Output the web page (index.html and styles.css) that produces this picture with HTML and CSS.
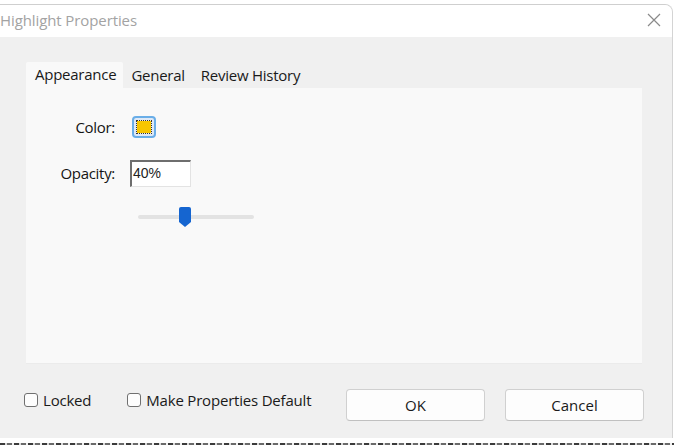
FILE: index.html
```html
<!DOCTYPE html>
<html>
<head>
<meta charset="utf-8">
<link rel="stylesheet" href="styles.css">
</head>
<body>
<div class="window">
  <div class="titlebar">
    <span class="title">Highlight Properties</span>
    <svg class="close" width="14" height="14" viewBox="0 0 14 14"><path d="M1 1L13 13M13 1L1 13" stroke="#8a8a8a" stroke-width="1.2" fill="none"/></svg>
  </div>
  <div class="body">
    <div class="tabs">
      <div class="tab active">Appearance</div>
      <div class="tab">General</div>
      <div class="tab">Review History</div>
    </div>
    <div class="panel">
      <div class="form">
        <div class="label">Color:</div>
        <div class="swatch"><div class="swatch-inner"></div></div>
        <div class="label">Opacity:</div>
        <div class="input">40%</div>
        <div></div>
        <div class="slider"><div class="track"></div><div class="thumb"></div></div>
      </div>
    </div>
    <div class="footer">
      <label class="check"><span class="box"></span>Locked</label>
      <label class="check second"><span class="box"></span>Make Properties Default</label>
      <div class="buttons">
        <button class="btn">OK</button>
        <button class="btn">Cancel</button>
      </div>
    </div>
  </div>
</div>
<div class="desktop"><div class="dash"></div></div>
</body>
</html>
```
FILE: styles.css
```css
html, body {
  margin: 0;
  padding: 0;
  background: #ffffff;
  width: 674px;
  height: 445px;
  overflow: hidden;
  font-family: "Open Sans", "Noto Sans", sans-serif;
  font-size: 15px;
  color: #141414;
}
.window {
  margin-top: 4px;
  width: 672px;
  height: 433px;
  border-top: 1px solid #cfcfcf;
  border-right: 1px solid #d4d4d4;
  border-top-right-radius: 8px;
  background: #f0f0f0;
  display: flex;
  flex-direction: column;
  overflow: hidden;
}
.titlebar {
  height: 32px;
  background: #ffffff;
  display: flex;
  align-items: center;
  justify-content: space-between;
  padding: 0 11px 0 0;
  flex: none;
}
.title {
  color: #a3a3a3;
  font-size: 15px;
  letter-spacing: -0.1px;
  margin-top: -2px;
}
.close {
  margin-top: -2px;
}
.body {
  flex: 1;
  padding: 25px 30px 0 26px;
  display: flex;
  flex-direction: column;
}
.tabs {
  display: flex;
  height: 26px;
  align-items: stretch;
}
.tab {
  padding: 2px 8px 0 8px;
  line-height: 22px;
  font-size: 15px;
  letter-spacing: -0.25px;
  color: #1a1a1a;
}
.tab.active {
  background: #f9f9f9;
  padding: 1px 7px 0 9px;
  border-top-left-radius: 2px;
  border-top-right-radius: 2px;
}
.panel {
  width: 616px;
  height: 276px;
  background: #f9f9f9;
  border-bottom: 1px solid #ebebeb;
  box-sizing: border-box;
}
.form {
  display: grid;
  grid-template-columns: 89px 150px;
  column-gap: 16px;
  grid-template-rows: 26px 28px 22px;
  row-gap: 19px;
  padding-top: 26px;
  align-items: center;
}
.label {
  text-align: right;
  font-size: 15px;
  letter-spacing: -0.3px;
}
.swatch {
  width: 20px;
  height: 18px;
  border: 2px solid #6aaee8;
  border-radius: 4px;
  background: #dfe9f6;
  display: flex;
  align-items: center;
  justify-content: center;
  margin-left: 1px;
}
.swatch-inner {
  width: 14px;
  height: 12px;
  background: #f7c600;
  outline: 1px dotted #333;
  outline-offset: 0px;
}
.input {
  width: 57px;
  height: 24px;
  background: #ffffff;
  border-top: 2px solid #6e6e6e;
  border-left: 2px solid #6e6e6e;
  border-right: 1px solid #e3e3e3;
  border-bottom: 1px solid #e3e3e3;
  line-height: 22px;
  padding-left: 1px;
  font-family: "Liberation Sans", "Open Sans", sans-serif;
  font-size: 14px;
  color: #222;
  box-sizing: content-box;
  margin-left: -1px;
}
.slider {
  position: relative;
  width: 116px;
  height: 22px;
  margin-left: 7px;
}
.track {
  position: absolute;
  left: 0;
  right: 0;
  top: 9px;
  height: 4px;
  border-radius: 2px;
  background: #e3e3e3;
}
.thumb {
  position: absolute;
  left: 41px;
  top: 1px;
  width: 12px;
  height: 20px;
  background: #1565d0;
  border-radius: 2px 2px 0 0;
  clip-path: polygon(0 0, 100% 0, 100% 75%, 50% 100%, 0 75%);
}
.footer {
  display: flex;
  align-items: flex-start;
  margin-top: 25px;
  margin-left: -2px;
}
.check {
  display: flex;
  align-items: center;
  font-size: 15px;
  letter-spacing: -0.2px;
  color: #1a1a1a;
  margin-top: 1px;
}
.check.second {
  margin-left: 36px;
}
.box {
  width: 12px;
  height: 12px;
  border: 1.5px solid #707070;
  border-radius: 3px;
  margin-right: 5px;
  background: #fdfdfd;
}
.buttons {
  margin-left: auto;
  display: flex;
  gap: 20px;
  margin-right: -2px;
}
.btn {
  width: 139px;
  height: 32px;
  background: #fdfdfd;
  border: 1px solid #d0d0d0;
  border-bottom-color: #c0c0c0;
  border-radius: 4px;
  font-family: "Open Sans", "Noto Sans", sans-serif;
  font-size: 15px;
  color: #1a1a1a;
}
.desktop {
  height: 8px;
  background: #ffffff;
  display: flex;
  flex-direction: column;
  justify-content: flex-end;
}
.dash {
  height: 3px;
  background: repeating-linear-gradient(90deg, #3a3a3a 0 5px, #d8d8d8 5px 7px, #6a6a6a 7px 12px, #f0f0f0 12px 14px);
}
```
